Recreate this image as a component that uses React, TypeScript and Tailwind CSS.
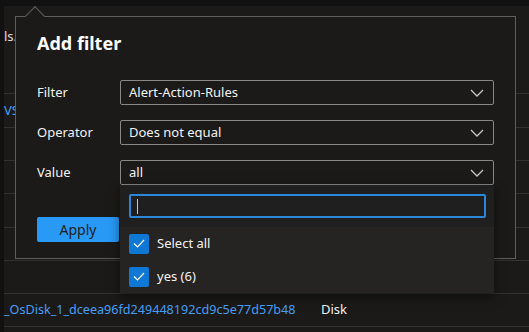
import React from "react";

const font = { fontFamily: '"Noto Sans", "Open Sans", sans-serif' };

function Chevron() {
  return (
    <svg width="14" height="8" viewBox="0 0 14 8" className="shrink-0">
      <polyline points="1,1 7,7 13,1" fill="none" stroke="#c8c6c4" strokeWidth="1.3" />
    </svg>
  );
}

function Check() {
  return (
    <div className="w-[20px] h-[20px] rounded-[2px] bg-[#0f78d4] flex items-center justify-center shrink-0">
      <svg width="12" height="9" viewBox="0 0 12 9">
        <polyline points="1,4.5 4.5,8 11,1" fill="none" stroke="#ffffff" strokeWidth="1.2" />
      </svg>
    </div>
  );
}

function Select({ label, value, open }: { label: string; value: string; open?: boolean }) {
  return (
    <div className="flex items-center">
      <span className="w-[83px] text-[13px] text-[#f3f2f1]">{label}</span>
      <div className="relative w-[374px]">
        <div className="h-[25px] border border-[#8a8886] rounded-[2px] flex items-center justify-between pl-[8px] pr-[9px]">
          <span className="text-[13px] text-[#f3f2f1]">{value}</span>
          <Chevron />
        </div>
        {open && (
          <div className="absolute left-0 top-full w-full z-20 shadow-[0_4px_10px_rgba(0,0,0,0.5)]">
            <div className="bg-[#1f1f1f] pt-[9px] pb-[9px] pl-[9px] pr-[8px]">
              <div className="h-[24px] border-2 border-[#2b88d8] rounded-[2px] flex items-center pl-[6px]">
                <div className="w-[1px] h-[15px] bg-[#c8c6c4]" />
              </div>
            </div>
            <div className="bg-[#252423]">
              {["Select all", "yes (6)"].map((t) => (
                <div key={t} className="h-[33px] flex items-center pl-[9px] gap-[8px]">
                  <Check />
                  <span className="text-[13px] text-[#f3f2f1]">{t}</span>
                </div>
              ))}
            </div>
          </div>
        )}
      </div>
    </div>
  );
}

export default function App() {
  return (
    <div className="relative w-[529px] h-[332px] overflow-hidden bg-[#1b1a19] flex" style={font}>
      <div className="w-[4px] h-full bg-[#111111]" />
      <div className="flex-1 flex flex-col">
        <div className="h-[6px] bg-[#111111]" />
        <div className="h-[87px] pt-[17px]">
          <span className="text-[13px] text-[#e1dfdd]">ls.</span>
        </div>
        <div className="h-[34px] border-t border-[#323130] flex items-center">
          <span className="text-[13px] text-[#479ef5]">VS</span>
        </div>
        <div className="h-[33px] border-t border-[#323130]" />
        <div className="h-[33px] border-t border-[#323130]" />
        <div className="h-[34px] border-t border-[#323130]" />
        <div className="h-[33px] border-t border-[#323130]" />
        <div className="h-[33px] border-t border-[#323130]" />
        <div className="h-[34px] border-t border-b border-[#323130] flex items-center">
          <span className="w-[317px] text-[12.6px] text-[#479ef5]">_OsDisk_1_dceea96fd249448192cd9c5e77d57b48</span>
          <span className="text-[13px] text-[#f3f2f1]">Disk</span>
        </div>
      </div>

      {/* callout */}
      <div className="absolute left-[15px] top-[16px] w-[501px] h-[243px] border border-[#605e5c] bg-[#1b1a19] px-[21px] pt-[12px] z-10">
        <h2 className="text-[18px] font-bold text-[#ffffff] leading-[28px]">Add filter</h2>
        <div className="mt-[23px] flex flex-col gap-[15px]">
          <Select label="Filter" value="Alert-Action-Rules" />
          <Select label="Operator" value="Does not equal" />
          <Select label="Value" value="all" open />
        </div>
        <button className="mt-[32px] w-[82px] h-[25px] rounded-[2px] bg-[#2899f5] text-[14px] text-[#201f1e] flex items-center justify-center">
          Apply
        </button>
      </div>
      <div className="absolute left-[28px] top-[9px] w-[14px] h-[14px] rotate-45 border-l border-t border-[#605e5c] bg-[#1b1a19] z-10" />
    </div>
  );
}
